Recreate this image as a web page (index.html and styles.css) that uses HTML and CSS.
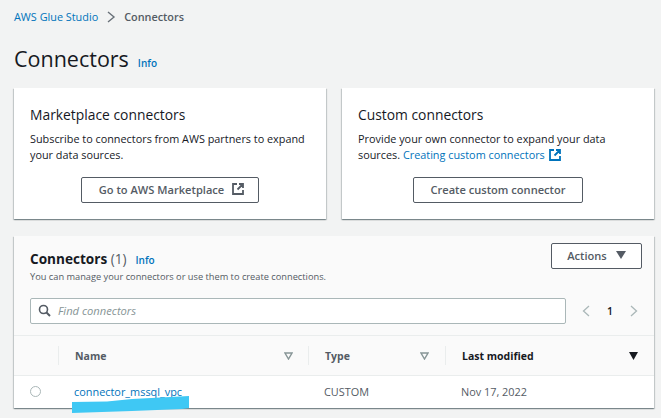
FILE: index.html
```html
<!DOCTYPE html>
<html lang="en">
<head>
    <meta charset="UTF-8">
    <meta name="viewport" content="width=device-width, initial-scale=1.0">
    <title>Connectors</title>
    <link rel="stylesheet" href="styles.css">
</head>

<body>

    <nav class="crumbs">
        <a href="#">AWS Glue Studio</a>
        <svg class="crumb-sep" width="10" height="12" viewBox="0 0 10 12"><path d="M2 1l6 5-6 5" fill="none" stroke="#687078" stroke-width="1.4"/></svg>
        <span class="crumb-current">Connectors</span>
    </nav>

    <div class="page-head">
        <h1>Connectors</h1>
        <a class="info" href="#">Info</a>
    </div>

    <div class="cards">
        <section class="card">
            <h2>Marketplace connectors</h2>
            <p>Subscribe to connectors from AWS partners to expand your data sources.</p>
            <div class="card-action">
                <button class="btn btn-market" type="button">Go to AWS Marketplace
                    <svg width="14" height="14" viewBox="0 0 14 14"><path d="M6 2H2v10h10V8M8 2h4v4M12 2L6.500 7.500" fill="none" stroke="#545b64" stroke-width="1.800"/></svg>
                </button>
            </div>
        </section>

        <section class="card">
            <h2>Custom connectors</h2>
            <p>Provide your own connector to expand your data sources. <a href="#">Creating custom connectors
                <svg class="ext" width="14" height="14" viewBox="0 0 14 14"><path d="M6 2H2v10h10V8M8 2h4v4M12 2L6.500 7.500" fill="none" stroke="#0073bb" stroke-width="1.800"/></svg></a></p>
            <div class="card-action">
                <button class="btn btn-custom" type="button">Create custom connector</button>
            </div>
        </section>
    </div>

    <section class="table-card">
        <div class="table-top">
            <div class="table-head">
                <div class="table-title">
                    <h2>Connectors <span class="count">(1)</span></h2>
                    <a class="info" href="#">Info</a>
                </div>
                <p>You can manage your connectors or use them to create connections.</p>
            </div>
            <button class="btn btn-actions" type="button">Actions
                <svg width="10" height="8" viewBox="0 0 10 8"><path d="M0 0h10L5 8z" fill="#545b64"/></svg>
            </button>
        </div>

        <div class="filter-row">
            <div class="search">
                <svg width="13" height="13" viewBox="0 0 13 13"><circle cx="5.500" cy="5.500" r="4" fill="none" stroke="#545b64" stroke-width="1.600"/><path d="M8.500 8.500L12 12" stroke="#545b64" stroke-width="2"/></svg>
                <span>Find connectors</span>
            </div>
            <div class="pager">
                <svg width="8" height="12" viewBox="0 0 8 12"><path d="M7 1L1.500 6 7 11" fill="none" stroke="#aab7b8" stroke-width="1.300"/></svg>
                <span>1</span>
                <svg width="8" height="12" viewBox="0 0 8 12"><path d="M1 1l5.500 5L1 11" fill="none" stroke="#aab7b8" stroke-width="1.300"/></svg>
            </div>
        </div>

        <div class="row row-head">
            <div class="cell-radio"></div>
            <div class="cell cell-name">Name
                <svg width="9" height="8" viewBox="0 0 9 8"><path d="M1 1h7L4.500 7z" fill="none" stroke="#879596" stroke-width="1.400"/></svg>
            </div>
            <div class="cell cell-type">Type
                <svg width="9" height="8" viewBox="0 0 9 8"><path d="M1 1h7L4.500 7z" fill="none" stroke="#879596" stroke-width="1.400"/></svg>
            </div>
            <div class="cell cell-date sorted">Last modified
                <svg width="9" height="8" viewBox="0 0 9 8"><path d="M0 0h9L4.500 8z" fill="#16191f"/></svg>
            </div>
        </div>

        <div class="row row-body">
            <div class="cell-radio"><span class="radio"></span></div>
            <div class="cell cell-name"><a href="#">connector_mssql_vpc</a></div>
            <div class="cell cell-type">CUSTOM</div>
            <div class="cell cell-date">Nov 17, 2022</div>
        </div>
    </section>

    <!-- blue marker scribble over the connector name -->
    <svg class="scribble" width="118" height="18" viewBox="0 0 118 18"><path d="M0 6L35 5.500 60 3 117 0v12l-7 1-50 2-60 2z" fill="#3fc8f4"/></svg>

</body>
</html>
```

FILE: styles.css
```css
body {
    font-family: "Open Sans", Arial, sans-serif;
    margin: 0;
    padding: 0 7px 0 14px;
    background-color: #f2f3f3;
    color: #16191f;
    font-size: 11px;
    position: relative;
    overflow: hidden;
    height: 418px;
    box-sizing: border-box;
}

a {
    color: #0073bb;
    text-decoration: none;
}

.crumbs {
    display: flex;
    align-items: center;
    gap: 8px;
    height: 33px;
    font-size: 10.850px;
}

.crumb-current {
    color: #545b64;
    font-weight: 600;
}

.page-head {
    display: flex;
    align-items: baseline;
    gap: 9px;
    height: 55px;
    padding-top: 7px;
    box-sizing: border-box;
}

h1 {
    margin: 0;
    font-size: 21.500px;
    font-weight: 400;
    line-height: 38px;
}

.info {
    font-size: 10px;
    font-weight: 600;
}

.cards {
    display: grid;
    grid-template-columns: 312px 312px;
    gap: 16px;
}

.card {
    background-color: #fff;
    box-shadow: 0 1px 1px 0 rgba(0, 28, 36, 0.3), 1px 1px 1px 0 rgba(0, 28, 36, 0.15), -1px 1px 1px 0 rgba(0, 28, 36, 0.15);
    padding: 17px 16px 16px;
    height: 131px;
    box-sizing: border-box;
}

.card h2 {
    margin: 0 0 6px;
    font-size: 13.850px;
    font-weight: 400;
    line-height: 20px;
}

.card p {
    margin: 0;
    font-size: 10.850px;
    line-height: 16px;
}

.card-action {
    display: flex;
    justify-content: center;
    margin-top: 14px;
}

.ext {
    vertical-align: -3px;
}

.btn {
    font-family: inherit;
    font-size: 11.100px;
    font-weight: 600;
    color: #545b64;
    background-color: #fff;
    border: 1px solid #545b64;
    border-radius: 2px;
    height: 26px;
    display: flex;
    align-items: center;
    justify-content: center;
    gap: 7px;
    padding: 0 0 2px;
}

.btn-market {
    width: 178px;
    padding-left: 4px;
}

.btn-custom {
    width: 170px;
}

.table-card {
    margin-top: 17px;
    background-color: #fff;
    height: 172px;
    box-shadow: 0 1px 1px 0 rgba(0, 28, 36, 0.3), 1px 1px 1px 0 rgba(0, 28, 36, 0.15), -1px 1px 1px 0 rgba(0, 28, 36, 0.15);
}

.table-top {
    background-color: #fafafa;
    display: flex;
    justify-content: space-between;
    padding: 7px 12px 0 16px;
    height: 52px;
    box-sizing: border-box;
}

.table-head {
    padding-top: 7px;
}

.table-title {
    display: flex;
    align-items: baseline;
    gap: 9px;
}

.table-title h2 {
    margin: 0;
    font-size: 13.600px;
    font-weight: 700;
    line-height: 18px;
}

.count {
    font-weight: 400;
    color: #545b64;
}

.table-head p {
    margin: 2px 0 0;
    font-size: 9.250px;
    line-height: 13px;
    color: #545b64;
}

.btn-actions {
    width: 91px;
    gap: 9px;
}

.filter-row {
    background-color: #fafafa;
    display: flex;
    align-items: center;
    gap: 16px;
    padding: 0 16px 2px;
    height: 48px;
    box-sizing: border-box;
    border-bottom: 1px solid #eaeded;
}

.search {
    flex: 1;
    display: flex;
    align-items: center;
    gap: 7px;
    height: 24px;
    padding-left: 7px;
    background-color: #fff;
    border: 1px solid #aab7b8;
    border-radius: 2px;
    font-size: 11.200px;
    font-style: italic;
    color: #879596;
}

.pager {
    display: flex;
    align-items: center;
    gap: 17px;
    font-size: 10.500px;
    font-weight: 600;
}

.row {
    display: flex;
    align-items: center;
    background-color: #fafafa;
}

.row-head {
    height: 40px;
    border-bottom: 1px solid #eaeded;
    font-weight: 700;
    font-size: 10.500px;
    color: #545b64;
    box-sizing: border-box;
}

.row-head .cell {
    display: flex;
    justify-content: space-between;
    align-items: center;
    height: 19px;
    border-left: 1px solid #eaeded;
}

.row-head .sorted {
    color: #16191f;
}

.row-body {
    background-color: #fff;
    height: 32px;
    padding-bottom: 1px;
    box-sizing: border-box;
    font-size: 10.900px;
    color: #545b64;
}

.cell-radio {
    width: 44px;
    padding-left: 16px;
    box-sizing: border-box;
    display: flex;
}

.radio {
    width: 9px;
    height: 9px;
    border: 1px solid #aab7b8;
    border-radius: 50%;
}

.cell {
    box-sizing: border-box;
    padding-left: 16px;
}

.cell-name {
    width: 250px;
    padding-right: 15px;
}

.cell-type {
    width: 137px;
    padding-right: 16px;
}

.cell-date {
    width: 209px;
    padding-right: 16px;
}

.scribble {
    position: absolute;
    left: 72px;
    top: 396px;
}
```
